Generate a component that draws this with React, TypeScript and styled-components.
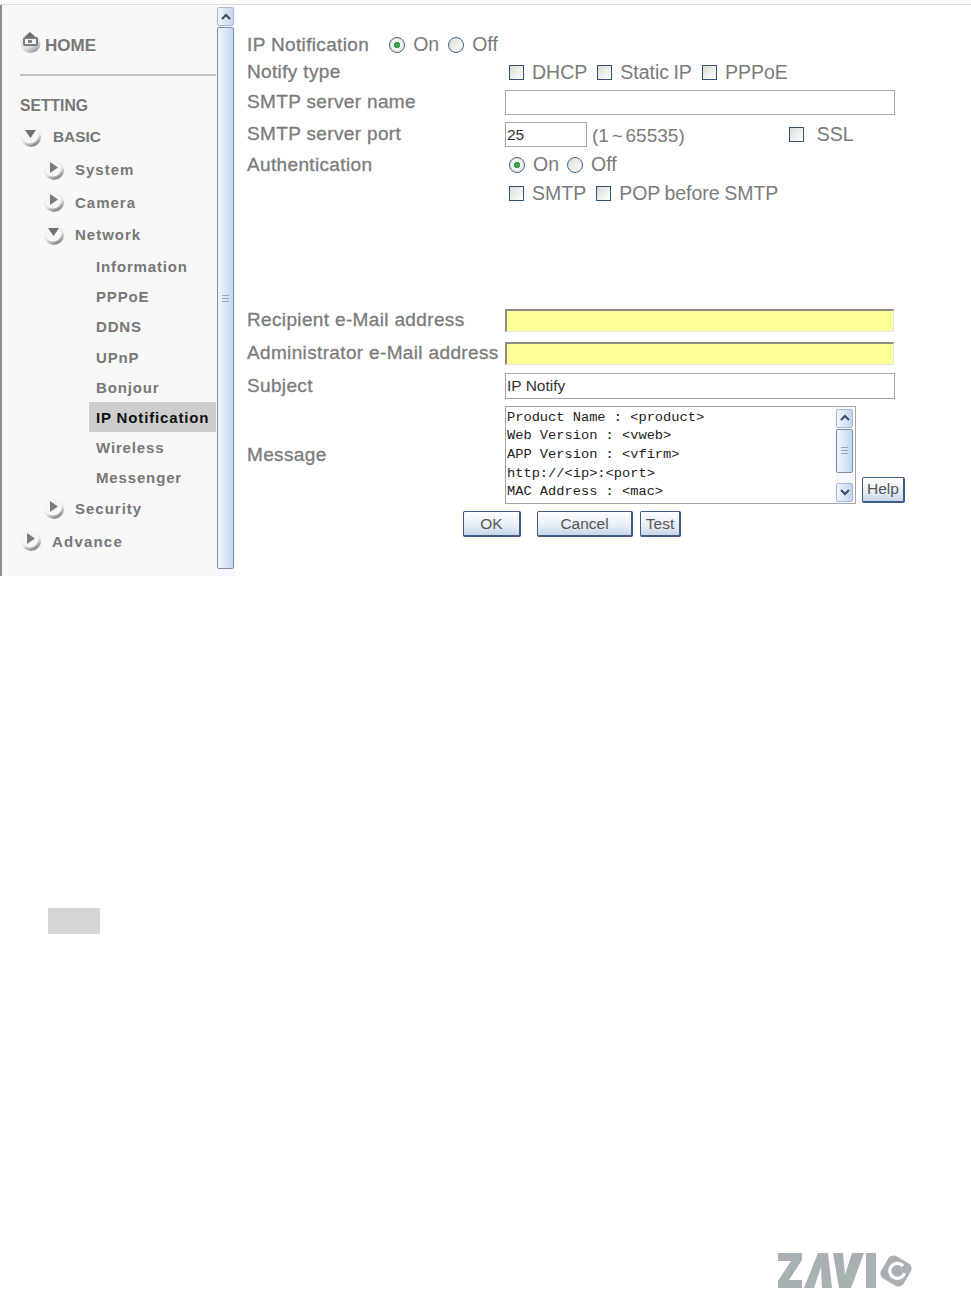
import React from "react";
import styled, { createGlobalStyle } from "styled-components";

const GlobalStyle = createGlobalStyle`
  html, body {
    margin: 0;
    background: #fff;
    font-family: "Liberation Sans", Arial, sans-serif;
  }
`;

const BallIcon: React.FC<{ open?: boolean }> = ({ open }) => (
  <svg width="22" height="22" viewBox="0 0 22 22">
    <defs>
      <linearGradient id="ballShade" x1="0.2" y1="0" x2="0.7" y2="1">
        <stop offset="0" stopColor="#fbfbfb" />
        <stop offset="0.6" stopColor="#e2e2e2" />
        <stop offset="1" stopColor="#757575" />
      </linearGradient>
    </defs>
    <circle cx="11" cy="11" r="10" fill="url(#ballShade)" />
    <circle cx="10" cy="9" r="8.6" fill="#f6f6f6" />
    {open ? (
      <path d="M5 4h11l-5.5 8z" fill="#707070" />
    ) : (
      <path d="M7 3l8 5.5-8 5.5z" fill="#7a7a7a" />
    )}
  </svg>
);

const HomeIcon = () => (
  <svg width="21" height="23" viewBox="0 0 21 23">
    <defs>
      <linearGradient id="homeShade" x1="0.2" y1="0" x2="0.8" y2="1">
        <stop offset="0" stopColor="#f6f6f6" />
        <stop offset="0.6" stopColor="#dedede" />
        <stop offset="1" stopColor="#8a8a8a" />
      </linearGradient>
    </defs>
    <ellipse cx="10.5" cy="12.5" rx="10" ry="9.5" fill="url(#homeShade)" />
    <path d="M10 1l5.5 5h-11z" fill="#6e6e6e" />
    <rect x="3" y="6" width="15" height="9" rx="2" fill="#7c7c7c" />
    <rect x="5" y="8" width="11" height="5" fill="#f2f2f2" />
    <rect x="8" y="9" width="4" height="3" fill="#808080" />
  </svg>
);

const ZavioLogo = () => (
  <svg width="136" height="38" viewBox="0 0 136 38">
    <g fill="#a9b0b3">
      <polygon points="0,0 24,0 24,7 11,27 24,27 24,35 0,35 0,28 13,8 0,8" />
      <polygon points="26,35 40,0 50,0 54,35 44,35 43,14 36,35" />
      <polygon points="55,0 65,0 67,22 74,0 86,0 73,35 61,35" />
      <rect x="88" y="0" width="10" height="35" />
      <rect x="105" y="5" width="26" height="26" rx="6" transform="rotate(30 118 18)" />
    </g>
    <path d="M125 13a7.5 7.5 0 1 0 1.5 7" fill="none" stroke="#fff" strokeWidth="3.2" />
  </svg>
);

const ScrollBarView: React.FC<{ $small?: boolean }> = ({ $small }) => (
  <Track $small={$small}>
    <ArrowButton>
      <svg width="12" height="8" viewBox="0 0 12 8">
        <path d="M2 6l4-4 4 4" fill="none" stroke="#3a4a60" strokeWidth="2" />
      </svg>
    </ArrowButton>
    <Thumb $small={$small}>
      <Grip />
    </Thumb>
    {$small && (
      <ArrowButton>
        <svg width="12" height="8" viewBox="0 0 12 8">
          <path d="M2 2l4 4 4-4" fill="none" stroke="#3a4a60" strokeWidth="2" />
        </svg>
      </ArrowButton>
    )}
  </Track>
);

const tree = [
  { label: "System", level: 2 },
  { label: "Camera", level: 2 },
  { label: "Network", level: 2, open: true },
];
const subs = ["Information", "PPPoE", "DDNS", "UPnP", "Bonjour", "IP Notification", "Wireless", "Messenger"];

const App: React.FC = () => {
  return (
    <>
      <GlobalStyle />
      <Page>
        <Frame>
          <Sidebar>
            <HomeRow>
              <HomeIcon />
              <span>HOME</span>
            </HomeRow>
            <Divider />
            <SectionTitle>SETTING</SectionTitle>
            <TreeRow $level={1} $caps>
              <BallIcon open />
              <span>BASIC</span>
            </TreeRow>
            {tree.map((t) => (
              <TreeRow key={t.label} $level={2}>
                <BallIcon open={t.open} />
                <span>{t.label}</span>
              </TreeRow>
            ))}
            {subs.map((s) => (
              <SubRow key={s} $active={s === "IP Notification"}>
                {s}
              </SubRow>
            ))}
            <TreeRow $level={2}>
              <BallIcon />
              <span>Security</span>
            </TreeRow>
            <TreeRow $level={1}>
              <BallIcon />
              <span>Advance</span>
            </TreeRow>
          </Sidebar>
          <ScrollBarView />
          <Content>
            <TopRow>
              <Label>IP Notification</Label>
              <Radio type="radio" defaultChecked name="notify" $ml={20} />
              <OptionText>On</OptionText>
              <Radio type="radio" name="notify" $ml={9} />
              <OptionText>Off</OptionText>
            </TopRow>
            <Row $h={28}>
              <Label>Notify type</Label>
              <Controls>
                <Check type="checkbox" />
                <OptionText>DHCP</OptionText>
                <Check type="checkbox" $ml={10} />
                <OptionText>Static IP</OptionText>
                <Check type="checkbox" $ml={10} />
                <OptionText>PPPoE</OptionText>
              </Controls>
            </Row>
            <Row $h={32}>
              <Label>SMTP server name</Label>
              <TextBox type="text" readOnly $w={390} $short />
            </Row>
            <Row $h={32}>
              <Label>SMTP server port</Label>
              <PortControls>
                <TextBox type="text" readOnly value="25" $w={82} $short />
                <RangeText>(1 ~ 65535)</RangeText>
                <Check type="checkbox" $ml={104} />
                <OptionText $ml={13}>SSL</OptionText>
              </PortControls>
            </Row>
            <Row $h={29}>
              <Label>Authentication</Label>
              <Controls>
                <Radio type="radio" defaultChecked name="auth" />
                <OptionText>On</OptionText>
                <Radio type="radio" name="auth" $ml={8} />
                <OptionText>Off</OptionText>
              </Controls>
            </Row>
            <Row $h={29}>
              <span />
              <Controls>
                <Check type="checkbox" />
                <OptionText>SMTP</OptionText>
                <Check type="checkbox" $ml={10} />
                <OptionText>POP before SMTP</OptionText>
              </Controls>
            </Row>
            <Gap />
            <Row $h={32}>
              <Label>Recipient e-Mail address</Label>
              <YellowBox type="text" readOnly />
            </Row>
            <Row $h={33}>
              <Label>Administrator e-Mail address</Label>
              <YellowBox type="text" readOnly />
            </Row>
            <Row $h={33}>
              <Label>Subject</Label>
              <TextBox type="text" readOnly value="IP Notify" $w={390} />
            </Row>
            <Row $h={105}>
              <Label>Message</Label>
              <MessageWrap>
                <MessageBox>
                  <MessageText>
                    {"Product Name : <product>\nWeb Version : <vweb>\nAPP Version : <vfirm>\nhttp://<ip>:<port>\nMAC Address : <mac>"}
                  </MessageText>
                  <ScrollBarView $small />
                </MessageBox>
                <HelpButton $w={43}>Help</HelpButton>
              </MessageWrap>
            </Row>
            <ButtonRow>
              <PushButton $w={58}>OK</PushButton>
              <PushButton $w={96} $ml={16}>Cancel</PushButton>
              <PushButton $w={41} $ml={7}>Test</PushButton>
            </ButtonRow>
          </Content>
        </Frame>
        <GreyBlock />
        <Footer>
          <ZavioLogo />
        </Footer>
      </Page>
    </>
  );
};

const Page = styled.div`
  width: 971px;
  height: 1295px;
  overflow: hidden;
  padding-top: 4px;
  box-sizing: border-box;
`;

const Frame = styled.div`
  height: 571px;
  display: flex;
  border-top: 1px solid #dedede;
`;

const Sidebar = styled.div`
  width: 214px;
  border-left: 2px solid #8e8e8e;
  background: #f8f8f8;
  padding-top: 25px;
  box-sizing: content-box;
  flex: none;
  color: #777;
  font-weight: bold;
`;

const HomeRow = styled.div`
  height: 30px;
  box-sizing: border-box;
  padding: 1px 0 0 18px;
  display: flex;
  align-items: center;
  gap: 4px;
  font-size: 17px;
  svg {
    margin-top: -6px;
  }
`;

const Divider = styled.div`
  height: 2px;
  margin: 14px 0 14px 18px;
  background: #c2c2c2;
`;

const SectionTitle = styled.div`
  height: 31px;
  line-height: 32px;
  padding-left: 18px;
  font-size: 15.7px;
`;

const TreeRow = styled.div<{ $level: number; $caps?: boolean }>`
  height: 32.5px;
  display: flex;
  align-items: center;
  gap: ${(p) => (p.$caps ? 11 : 10)}px;
  padding-left: ${(p) => (p.$level === 1 ? 18 : 41)}px;
  font-size: ${(p) => (p.$caps ? 15.4 : 15)}px;
  letter-spacing: ${(p) => (p.$caps ? 0 : p.$level === 1 ? 1.2 : 1)}px;
`;

const SubRow = styled.div<{ $active?: boolean }>`
  height: 30.2px;
  line-height: 31px;
  margin-left: 87px;
  padding-left: 7px;
  font-size: 15px;
  letter-spacing: 0.85px;
  white-space: nowrap;
  background: ${(p) => (p.$active ? "#cdcdcd" : "transparent")};
  color: ${(p) => (p.$active ? "#111" : "#777")};
`;

const Track = styled.div<{ $small?: boolean }>`
  width: 19px;
  flex: none;
  display: flex;
  flex-direction: column;
  align-items: center;
  background: #f4f7fb;
  padding-top: 2px;
  padding-bottom: ${(p) => (p.$small ? 1 : 7)}px;
  margin-right: ${(p) => (p.$small ? 1 : 0)}px;
  box-sizing: border-box;
`;

const ArrowButton = styled.div`
  width: 17px;
  height: 19px;
  flex: none;
  display: flex;
  align-items: center;
  justify-content: center;
  box-sizing: border-box;
  border: 1px solid #a9b8cf;
  border-radius: 2px;
  background: linear-gradient(to right, #eef4fc, #c3d6ef);
`;

const Thumb = styled.div<{ $small?: boolean }>`
  ${(p) => (p.$small ? "height: 44px; margin-bottom: 10px;" : "flex: 1;")}
  width: 17px;
  margin-top: 1px;
  box-sizing: border-box;
  border: 1px solid #7d8fa8;
  border-radius: 2px;
  background: linear-gradient(to right, #f0f5fc, #c3d7f1);
  display: flex;
  align-items: center;
  justify-content: center;
`;

const Grip = styled.div`
  width: 7px;
  height: 7px;
  background: repeating-linear-gradient(to bottom, #9aa6b5 0 1px, transparent 1px 3px);
`;

const Content = styled.div`
  flex: 1;
  padding: 26px 0 0 12px;
  color: #7b7b7b;
  font-size: 19px;
`;

const TopRow = styled.div`
  height: 27px;
  display: flex;
  align-items: center;
`;

const Row = styled.div<{ $h: number }>`
  height: ${(p) => p.$h}px;
  display: grid;
  grid-template-columns: 258px 1fr;
  align-items: center;
`;

const Label = styled.span`
  font-size: 19px;
  letter-spacing: 0.35px;
  white-space: nowrap;
  -webkit-text-stroke: 0.3px #7b7b7b;
`;

const Controls = styled.div`
  display: flex;
  align-items: center;
  padding-left: 4px;
`;

const PortControls = styled.div`
  display: flex;
  align-items: center;
`;

const OptionText = styled.span<{ $ml?: number }>`
  margin-left: ${(p) => p.$ml ?? 8}px;
  font-size: 19.5px;
  word-spacing: -1px;
  white-space: nowrap;
`;

const RangeText = styled.span`
  margin-left: 5px;
  padding-top: 4px;
  font-size: 19px;
  word-spacing: -2.5px;
  white-space: nowrap;
`;

const Check = styled.input<{ $ml?: number }>`
  appearance: none;
  width: 15px;
  height: 15px;
  margin: 0 0 0 ${(p) => p.$ml ?? 0}px;
  flex: none;
  box-sizing: border-box;
  border: 1.5px solid #2f5474;
  background: linear-gradient(135deg, #dcdcd6, #fff);
`;

const Radio = styled.input<{ $ml?: number }>`
  appearance: none;
  width: 16px;
  height: 16px;
  margin: 0 0 0 ${(p) => p.$ml ?? 0}px;
  flex: none;
  box-sizing: border-box;
  border: 1.5px solid #3d6484;
  border-radius: 50%;
  background: linear-gradient(135deg, #dcdcd6, #fff);
  &:checked {
    background: radial-gradient(circle, #3f9d55 0 3px, #eeeeea 3.5px);
  }
`;

const TextBox = styled.input<{ $w: number; $short?: boolean }>`
  width: ${(p) => p.$w}px;
  height: ${(p) => (p.$short ? 25 : 26)}px;
  box-sizing: border-box;
  margin: ${(p) => (p.$short ? 1 : 0)}px 0 0;
  padding: 1px;
  border: 1px solid #a5a5a5;
  background: #fff;
  font-family: "Liberation Sans", Arial, sans-serif;
  font-size: 15.5px;
  color: #333;
  outline: none;
`;

const YellowBox = styled.input`
  width: 389px;
  height: 23px;
  box-sizing: border-box;
  margin: 1px 0 0;
  border: 1px solid #e4e4e4;
  border-top: 2px solid #8d8d80;
  border-left: 2px solid #8d8d80;
  background: #ffff99;
  outline: none;
`;

const MessageWrap = styled.div`
  display: flex;
  align-items: flex-end;
  gap: 6px;
`;

const MessageBox = styled.div`
  width: 351px;
  height: 98px;
  box-sizing: border-box;
  border: 1px solid #a5a5a5;
  display: flex;
  background: #fff;
`;

const MessageText = styled.pre`
  flex: 1;
  margin: 0;
  padding: 2px 1px;
  font-family: "Liberation Mono", "DejaVu Sans Mono", monospace;
  font-size: 13.7px;
  line-height: 18.7px;
  color: #222;
`;

const PushButton = styled.button<{ $w: number; $ml?: number }>`
  width: ${(p) => p.$w}px;
  height: 26px;
  margin: 0 0 0 ${(p) => p.$ml ?? 0}px;
  padding: 0;
  flex: none;
  box-sizing: border-box;
  border: 1px solid #3d5f85;
  border-bottom-width: 2px;
  border-right-width: 2px;
  border-radius: 2px;
  background: linear-gradient(to bottom, #ffffff, #e6edf6 60%, #c8d6e8);
  font-family: "Liberation Sans", Arial, sans-serif;
  font-size: 15.5px;
  color: #555;
`;

const HelpButton = styled(PushButton)`
  margin-bottom: 1px;
`;

const ButtonRow = styled.div`
  display: flex;
  padding: 4px 0 0 216px;
`;

const Gap = styled.div`
  height: 96px;
`;

const GreyBlock = styled.div`
  width: 52px;
  height: 26px;
  margin: 332px 0 0 48px;
  background: #d6d6d6;
`;

const Footer = styled.div`
  display: flex;
  justify-content: flex-end;
  padding: 319px 57px 0 0;
`;

export default App;
